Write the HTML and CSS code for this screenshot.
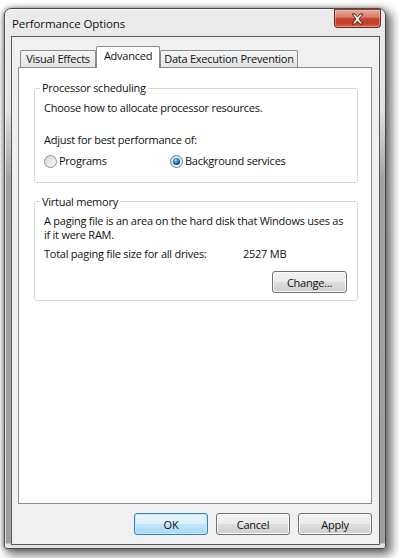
FILE: index.html
```html
<!DOCTYPE html>
<html>
<head>
<meta charset="utf-8">
<title>Performance Options</title>
<link rel="stylesheet" href="styles.css">
</head>
<body>
<div class="window">
  <div class="titlebar">
    <span class="title">Performance Options</span>
    <div class="close">
      <svg class="close-x" width="13" height="12" viewBox="0 0 13 12">
        <polygon points="1,1 4,1 6.5,4 9,1 12,1 8,6 12,11 9,11 6.5,8 4,11 1,11 5,6" fill="#ffffff" stroke="#5a2219" stroke-width="1" stroke-linejoin="round"/>
      </svg>
    </div>
  </div>
  <div class="client">
    <div class="tabs">
      <div class="tab t1">Visual Effects</div>
      <div class="tab t2 active">Advanced</div>
      <div class="tab t3">Data Execution Prevention</div>
    </div>
    <div class="panel">
      <div class="group g1">
        <div class="legend">Processor scheduling</div>
        <p class="choose">Choose how to allocate processor resources.</p>
        <p class="adjust">Adjust for best performance of:</p>
        <div class="radios">
          <div class="radio">
            <svg width="13" height="13" viewBox="0 0 13 13">
              <defs>
                <linearGradient id="rg1" x1="0" y1="0" x2="1" y2="1">
                  <stop offset="0" stop-color="#d2d2d2"/>
                  <stop offset="1" stop-color="#fcfcfc"/>
                </linearGradient>
              </defs>
              <circle cx="6.5" cy="6.5" r="6" fill="url(#rg1)" stroke="#8e8f8f"/>
            </svg>
            <span>Programs</span>
          </div>
          <div class="radio">
            <svg width="13" height="13" viewBox="0 0 13 13">
              <defs>
                <linearGradient id="rg2" x1="0" y1="0" x2="1" y2="1">
                  <stop offset="0" stop-color="#d2d2d2"/>
                  <stop offset="1" stop-color="#fcfcfc"/>
                </linearGradient>
                <radialGradient id="dot" cx="0.4" cy="0.35" r="0.7">
                  <stop offset="0" stop-color="#a9e2fa"/>
                  <stop offset="0.45" stop-color="#2f86bd"/>
                  <stop offset="1" stop-color="#0d3b5e"/>
                </radialGradient>
              </defs>
              <circle cx="6.5" cy="6.5" r="6" fill="url(#rg2)" stroke="#5c7f99"/>
              <circle cx="6.5" cy="6.5" r="3.6" fill="url(#dot)"/>
            </svg>
            <span>Background services</span>
          </div>
        </div>
      </div>
      <div class="group g2">
        <div class="legend">Virtual memory</div>
        <p class="para">A paging file is an area on the hard disk that Windows uses as<br>if it were RAM.</p>
        <div class="total"><span>Total paging file size for all drives:</span><span>2527 MB</span></div>
        <div class="change-row"><div class="btn change">Change...</div></div>
      </div>
    </div>
    <div class="buttons">
      <div class="btn default">OK</div>
      <div class="btn">Cancel</div>
      <div class="btn">Apply</div>
    </div>
  </div>
</div>
</body>
</html>
```
FILE: styles.css
```css
* { box-sizing: border-box; }
html, body { margin: 0; padding: 0; }
body {
  background: #ffffff;
  width: 399px;
  height: 558px;
  overflow: hidden;
  font-family: "Open Sans", "Noto Sans", sans-serif;
  font-size: 11px;
  letter-spacing: -0.25px;
  color: #111;
}
p { margin: 0; }

.window {
  margin: 8px 0 0 4px;
  width: 382px;
  height: 541px;
  border: 1px solid #4a4a4a;
  border-radius: 7px 7px 3px 3px;
  background: linear-gradient(to bottom, #ececec 0, #e2e2e2 100px, #a3a3a3 170px, #9f9f9f calc(100% - 5px), #e2e2e2 calc(100% - 4px));
  box-shadow: 4px 4px 10px 2px rgba(0,0,0,0.55), -1px 0 4px rgba(0,0,0,0.35), inset 1px 1px 0 rgba(255,255,255,0.7);
  padding: 0 5px 3px 6px;
  display: flex;
  flex-direction: column;
}

.titlebar {
  height: 27px;
  display: flex;
  align-items: flex-start;
}
.title {
  padding: 7px 0 0 1px;
  line-height: 15px;
  font-size: 11.5px;
  letter-spacing: -0.1px;
}
.close {
  margin-left: auto;
  margin-right: -1px;
  width: 47px;
  height: 19px;
  border: 1px solid #6e2a20;
  border-top-color: #8a4136;
  border-radius: 0 0 4px 4px;
  background: linear-gradient(to bottom, #e8a898 0%, #d9806c 40%, #c4432c 52%, #c03e28 78%, #d96c4f 100%);
  box-shadow: inset 0 0 0 1px rgba(255,210,200,0.4);
  display: flex;
  align-items: center;
  justify-content: center;
}

.client {
  width: 369px;
  height: 509px;
  border: 1px solid #5a5a5a;
  background: #f0f0f0;
  padding: 9px 7px 0 6px;
}

.tabs {
  display: flex;
  align-items: flex-end;
  height: 21px;
  padding-left: 2px;
}
.tab {
  height: 17px;
  border: 1px solid #898c95;
  border-bottom: none;
  border-radius: 2px 2px 0 0;
  background: linear-gradient(to bottom, #f4f4f4, #e4e4e4);
  line-height: 15px;
  text-align: center;
  white-space: nowrap;
}
.tab.active {
  height: 22px;
  margin-bottom: -1px;
  background: #ffffff;
  padding-top: 1px;
  position: relative;
  z-index: 1;
}
.t1 { width: 76px; }
.t2 { width: 64px; }
.t3 { width: 138px; }

.panel {
  width: 354px;
  height: 437px;
  border: 1px solid #898c95;
  background: #ffffff;
  padding: 20px 13px 0 15px;
}

.group {
  border: 1px solid #d5d5d5;
  border-radius: 3px;
  padding: 0 10px 0 9px;
  line-height: 15px;
}
.legend {
  display: table;
  margin: -9px 0 0 -4px;
  padding: 0 2px;
  background: #ffffff;
}
.g1 { padding-bottom: 14px; }
.g1 .choose { margin-top: 5px; }
.g1 .adjust { margin-top: 17px; }
.radios {
  margin-top: 6px;
  height: 15px;
  display: grid;
  grid-template-columns: 126px auto;
}
.radio {
  display: flex;
  align-items: center;
  gap: 2px;
}
.radio svg { display: block; margin-top: 2px; }

.g2 { margin-top: 18px; padding-bottom: 7px; }
.g2 .legend { margin-top: -8px; }
.para { margin-top: 5px; line-height: 14px; }
.total {
  margin-top: 4px;
  display: grid;
  grid-template-columns: 199px auto;
}
.change-row {
  margin-top: 10px;
  display: flex;
  justify-content: flex-end;
}

.btn {
  width: 74px;
  height: 22px;
  border: 1px solid #707070;
  border-radius: 3px;
  background: linear-gradient(to bottom, #f2f2f2 0%, #ebebeb 50%, #dddddd 51%, #cfcfcf 100%);
  box-shadow: inset 0 0 0 1px #fbfbfb;
  display: flex;
  align-items: center;
  justify-content: center;
  line-height: 15px;
}
.change { width: 75px; }
.btn.default {
  border-color: #3c7fb1;
  background: linear-gradient(to bottom, #eaf6fd 0%, #d9f0fc 50%, #bee6fd 51%, #a7d9f5 100%);
  box-shadow: inset 0 0 0 1px #c5e9fc;
}

.buttons {
  margin-top: 9px;
  width: 354px;
  display: flex;
  justify-content: flex-end;
  gap: 8px;
}
```
